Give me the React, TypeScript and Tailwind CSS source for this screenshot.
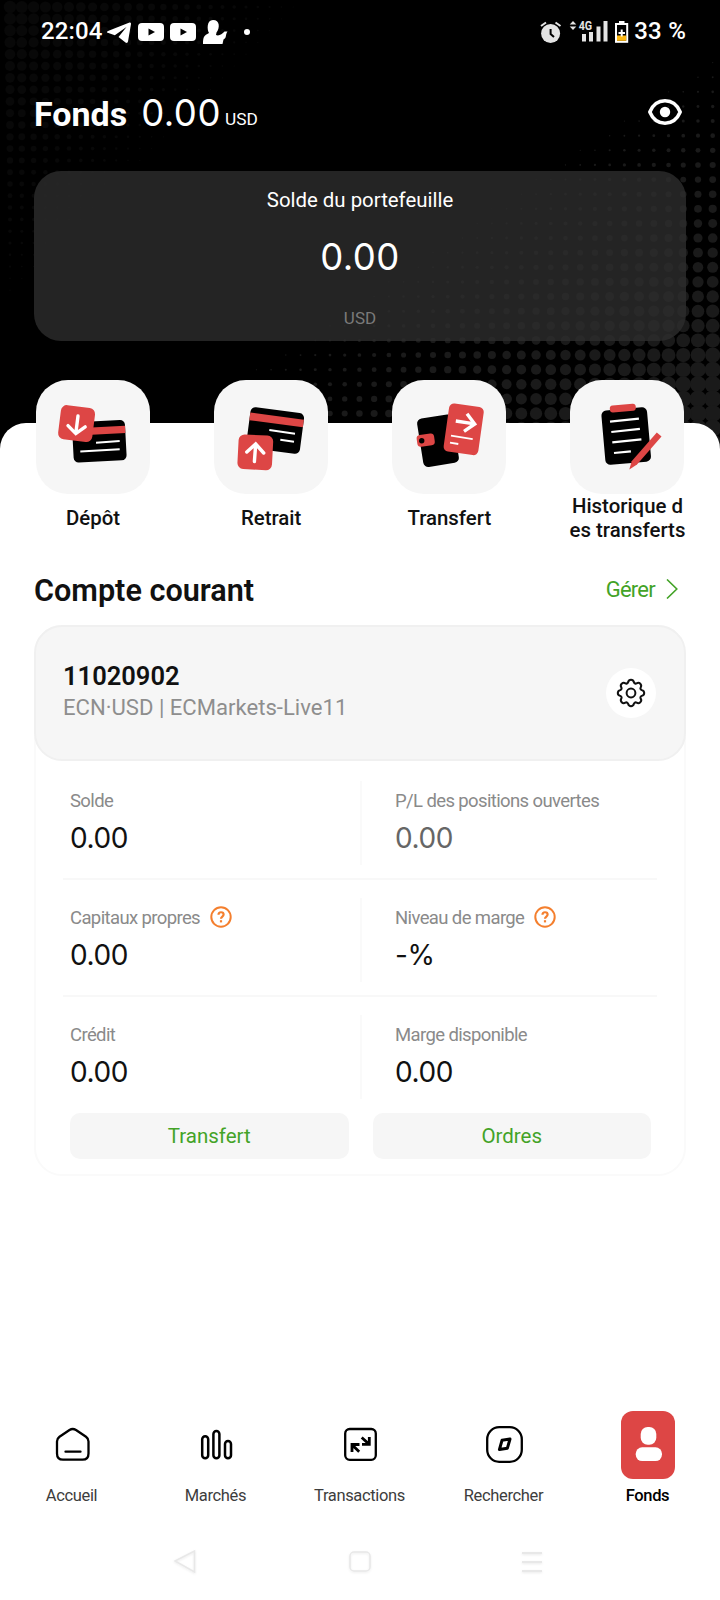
import type { ReactNode } from 'react';

const RED = '#dd4645';

const actions = [
  { label: 'Dépôt', icon: <DepositIcon /> },
  { label: 'Retrait', icon: <WithdrawIcon /> },
  { label: 'Transfert', icon: <TransferIcon /> },
  { label: 'Historique d\nes transferts', icon: <HistoryIcon /> },
];

const metrics = [
  [{ label: 'Solde', value: '0.00' }, { label: 'P/L des positions ouvertes', value: '0.00', muted: true }],
  [{ label: 'Capitaux propres', value: '0.00', help: true }, { label: 'Niveau de marge', value: '-%', help: true }],
  [{ label: 'Crédit', value: '0.00' }, { label: 'Marge disponible', value: '0.00' }],
];

function Halftone() {
  const dots: ReactNode[] = [];
  for (let y = 48; y < 450; y += 14.62) {
    for (let x = 712.7; x > 240; x -= 14.72) {
      const r = Math.min(8.6, 7.6 + (y - 355) * 0.024 - (712 - x) * 0.0163);
      if (r > 0.5) dots.push(<circle key={`r${x}-${y}`} cx={x} cy={y} r={r} fill="#1a1a1a" />);
    }
  }
  for (let y = 7; y < 300; y += 11.8) {
    for (let x = 10; x < 320; x += 11.8) {
      const r = 6.6 - x * 0.02 - y * 0.02;
      if (r > 0.5) dots.push(<circle key={`l${x}-${y}`} cx={x} cy={y} r={r} fill="#080808" />);
    }
  }
  return <svg className="absolute inset-0" width="720" height="460" viewBox="0 0 720 460">{dots}</svg>;
}

function DepositIcon() {
  return (
    <svg width="114" height="114" viewBox="0 0 114 114" fill="none" strokeLinecap="round">
      <g transform="rotate(-3 63.3 61.2)">
        <rect x="36.8" y="41" width="53" height="40.5" rx="5" fill="#000" />
        <rect x="36.8" y="47" width="53" height="7.4" fill={RED} />
      </g>
      <path d="M60 62.7L83.7 61M44.3 71.4L83.7 69.3" stroke="#fff" strokeWidth="2" strokeLinecap="butt" />
      <rect x="23.4" y="26.4" width="34.4" height="34.4" rx="6" fill={RED} transform="rotate(7 40.6 43.6)" />
      <path d="M42 36L39.8 53.4M32 45.6L39.8 53.6L49.2 46.9" stroke="#fff" strokeWidth="3.4" />
    </svg>
  );
}

function WithdrawIcon() {
  return (
    <svg width="114" height="114" viewBox="0 0 114 114" fill="none" strokeLinecap="round">
      <g transform="rotate(7.5 61.2 50.5)">
        <rect x="34.2" y="30" width="54" height="41" rx="5" fill="#000" />
        <rect x="34.2" y="36" width="54" height="7.6" fill={RED} />
      </g>
      <path d="M55.3 50L81 53.7M66.3 59.7L80 61.7" stroke="#fff" strokeWidth="2" strokeLinecap="butt" />
      <rect x="24" y="55" width="34.6" height="34.6" rx="6" fill={RED} transform="rotate(3 41.3 72.3)" />
      <path d="M40.4 81.5L41.7 64M32.8 72L41.7 64L49.7 73" stroke="#fff" strokeWidth="3.4" />
    </svg>
  );
}

function TransferIcon() {
  return (
    <svg width="114" height="114" viewBox="0 0 114 114" fill="none">
      <rect x="28" y="36.2" width="36" height="49" rx="5" fill="#000" transform="rotate(-9 46 60.7)" />
      <rect x="24.9" y="54.2" width="17.6" height="11.8" rx="3.5" fill={RED} transform="rotate(-8 33.7 60)" />
      <circle cx="29.7" cy="60.7" r="2.7" fill="#000" />
      <rect x="54.2" y="25" width="35" height="48.6" rx="5" fill={RED} transform="rotate(8 71.7 49.3)" />
      <path d="M63.8 41L82.5 43.9M75 33.8L82.7 44L72 51.3" stroke="#fff" strokeWidth="3.4" />
      <path d="M59 55.7L80.7 59.1M58 62.6L66.3 64" stroke="#fff" strokeWidth="1.8" />
    </svg>
  );
}

function HistoryIcon() {
  return (
    <svg width="114" height="114" viewBox="0 0 114 114" fill="none">
      <rect x="33.3" y="28.8" width="45.8" height="54.5" rx="5" fill="#000" transform="rotate(-5 56.2 56)" />
      <rect x="39.8" y="24.6" width="26" height="7" rx="3" fill={RED} transform="rotate(-5 52.8 28)" />
      <path d="M40 41.7L68.9 38.6M41.3 52L69.9 48.8M42.3 62.3L71.4 59.3M44 73L60.9 71.3" stroke="#fff" strokeWidth="2.2" />
      <path d="M86.8 52.5L91.5 56.6L67 84.5L59.3 89.4L61.7 81.2Z" fill={RED} />
    </svg>
  );
}

function StatusBar() {
  return (
    <div className="flex h-[63px] items-center pl-[41px] pr-[34px] text-[24px] font-medium leading-none">
      <span className="-mt-px tracking-[0.1px]">22:04</span>
      <svg className="ml-1" width="152" height="28" viewBox="106 18 152 28" fill="#fff">
        <path d="M107 32.5Q106.600 31.500 108 31L129.500 22.500Q131.300 22 131 24L128 41.500Q127.500 43.800 125.500 42.500L118.500 37L126.500 27L114.800 35.200Z" />
        <rect x="138" y="23" width="26" height="18" rx="4" />
        <path d="M148.500 28.500L155 32L148.500 35.500Z" fill="#000" />
        <rect x="170" y="23" width="26" height="18" rx="4" />
        <path d="M180.500 28.500L187 32L180.500 35.500Z" fill="#000" />
        <path d="M203 44C203 37 204 35.500 209 33C207 30 206.500 20 213 20C220 20 220 28 216.500 32.500L216 35C219 36.500 222 34 224.500 31.500L227.500 31.500C225 35 227 38 223.500 39.500L222.500 44Z" />
        <circle cx="247" cy="32" r="3" />
      </svg>
      <svg className="ml-auto" width="92" height="28" viewBox="540 18 92 28" fill="#e4e4e4">
        <circle cx="550.6" cy="33.500" r="9.500" />
        <path d="M541 26L546 22.500M560.500 26L555.500 22.500" stroke="#e4e4e4" strokeWidth="2" />
        <path d="M550.600 29V34L554 37" stroke="#000" strokeWidth="2" fill="none" />
        <path d="M569.700 24.500L573 21L576.300 24.500ZM569.700 26.500L573 30L576.300 26.500Z" />
        <text x="578.700" y="30" fontSize="12" fontWeight="700" textLength="13.500" lengthAdjust="spacingAndGlyphs">4G</text>
        <rect x="582" y="34" width="4" height="7.500" />
        <rect x="589" y="32" width="4" height="9.500" />
        <rect x="596.500" y="26.500" width="4" height="15" />
        <rect x="603.500" y="21" width="4" height="20.500" />
        <rect x="619" y="21" width="5.500" height="3" fill="#fff" />
        <rect x="616" y="24" width="11.200" height="17.800" fill="#000" stroke="#fff" strokeWidth="2" />
        <rect x="617" y="35.500" width="9.200" height="5.300" fill="#fdb813" />
        <path d="M618.500 33H625M621.700 29.500V36.500" stroke="#fff" strokeWidth="2" />
      </svg>
      <span className="-mt-0.5 ml-0.5 tracking-[0.2px]">33 %</span>
    </div>
  );
}

function Metric({ label, value, muted, help }: { label: string; value: string; muted?: boolean; help?: boolean }) {
  return (
    <div className="pt-[26px]">
      <div className="flex h-[26px] items-center text-[18.5px] tracking-[-0.62px] text-[#8a8a8a]">
        {label}
        {help && (
          <svg className="mb-1 ml-[10px]" width="22" height="22" viewBox="0 0 22 22" fill="none" stroke="#f47f2e">
            <circle cx="11" cy="11" r="9.700" strokeWidth="2" />
            <path d="M8.500 8.800C8.500 5.300 13.600 5.500 13.600 8.600C13.600 10.700 11 10.500 11 12.800" strokeWidth="2.200" />
            <path d="M11 14.200V16.400" strokeWidth="2.200" />
          </svg>
        )}
      </div>
      <div className={`mt-[5px] font-[Inter] text-[28px] leading-9 tracking-[-0.4px] ${muted ? 'text-[#666]' : 'text-[#111]'}`}>{value}</div>
    </div>
  );
}

function NavItem({ label, active, children }: { label: string; active?: boolean; children: ReactNode }) {
  return (
    <div className="flex flex-1 flex-col items-center">
      <div className={`h-[68px] w-[54px] rounded-xl ${active ? 'bg-[#dd4645]' : ''}`}>
        <svg width="54" height="68" viewBox="0 0 54 68" fill="none" stroke={active ? 'none' : '#000'} strokeWidth="2.3" strokeLinejoin="round" strokeLinecap="round">{children}</svg>
      </div>
      <span className={`mt-[5px] pr-px text-[16.5px] leading-6 tracking-[-0.35px] ${active ? 'font-medium text-black' : 'text-[#3d3d3d]'}`}>{label}</span>
    </div>
  );
}

export default function App() {
  return (
    <div className="relative h-[1600px] w-[720px] overflow-hidden bg-black font-[Roboto,sans-serif] text-white">
      <Halftone />
      <div className="relative flex h-full flex-col">
        <StatusBar />

        <header className="flex h-[108px] items-start pl-[34px] pr-[38px] pt-[28px]">
          <h1 className="mt-[3px] text-[34px] font-bold leading-[40px]">Fonds</h1>
          <span className="ml-[14px] font-[Inter] text-[36.5px] leading-[44px] tracking-[0.5px]">0.00</span>
          <span className="ml-[4px] mt-[16px] text-[17.3px] leading-6">USD</span>
          <svg className="ml-auto mt-[8px]" width="34" height="26" viewBox="0 0 34 26" fill="none" stroke="#fff" strokeWidth="3.500">
            <path d="M1.800 13C8 -1.900 26 -1.900 32.200 13C26 27.900 8 27.900 1.800 13Z" strokeLinejoin="round" />
            <circle cx="17" cy="13" r="5.200" fill="#fff" stroke="none" />
          </svg>
        </header>

        <section className="mx-[34px] flex h-[170px] flex-col items-center rounded-[27px] bg-[#2d2d2d]/80">
          <div className="mt-[15px] text-[20.4px] leading-7">Solde du portefeuille</div>
          <div className="mt-[21px] font-[Inter] text-[36.5px] leading-[44px] tracking-[0.4px]">0.00</div>
          <div className="mt-[27px] text-[17px] leading-6 text-[#7a7a7a]">USD</div>
        </section>

        <main className="mt-[82px] flex flex-1 flex-col rounded-t-[26px] bg-white text-[#111]">
          <div className="-mt-[43px] flex justify-between pl-9 pr-[35.500px]">
            {actions.map(({ label, icon }) => (
              <div key={label} className="flex w-[114px] flex-col items-center">
                <div className="h-[114px] w-[114px] rounded-[32px] bg-[#f6f6f6]">{icon}</div>
                <div className="flex h-12 items-center whitespace-pre text-center text-[20.4px] font-medium leading-6">{label}</div>
              </div>
            ))}
          </div>

          <div className="mt-[27px] flex h-10 items-center justify-between pl-[34px] pr-[42px]">
            <h2 className="mt-[3px] text-[30.6px] font-semibold">Compte courant</h2>
            <div className="flex items-center gap-[11px] text-[22px] tracking-[-0.75px] text-[#43a327]">
              Gérer
              <svg width="12" height="20" viewBox="0 0 12 20" fill="none" stroke="#43a327" strokeWidth="1.600"><path d="M1 .5L10.800 10L1 19.500" /></svg>
            </div>
          </div>

          <section className="mx-[34px] mt-4 h-[551px] rounded-[28px] border-2 border-[#fafafa]">
            <div className="-mx-0.5 -mt-0.5 flex h-[136px] items-center justify-between rounded-[28px] border-2 border-[#f0f0f0] bg-[#f6f6f6] pl-[27px] pr-[28px]">
              <div className="pb-0.5">
                <div className="text-[25.5px] font-semibold leading-[30px]">11020902</div>
                <div className="text-[22.1px] leading-8 text-[#8e8e8e]">ECN·USD | ECMarkets-Live11</div>
              </div>
              <div className="flex h-[50px] w-[50px] items-center justify-center rounded-full bg-white">
                <svg width="30" height="30" viewBox="-15 -15 30 30" fill="none" stroke="#111" strokeWidth="2" strokeLinejoin="round">
                  <path d="M-2.900 -10.800Q-2.300 -13.200 0 -13.200T2.900 -10.800Q4 -8.700 5.600 -9.700Q7.700 -11 9.300 -9.300T9.700 -5.600Q8.700 -4 10.800 -2.900Q13.200 -2.300 13.200 0T10.800 2.900Q8.700 4 9.700 5.600Q11 7.700 9.300 9.300T5.600 9.700Q4 8.700 2.900 10.800Q2.300 13.200 0 13.200T-2.900 10.800Q-4 8.700 -5.600 9.700Q-7.700 11 -9.300 9.300T-9.700 5.600Q-8.700 4 -10.800 2.900Q-13.200 2.300 -13.200 0T-10.800 -2.900Q-8.700 -4 -9.700 -5.600Q-11 -7.700 -9.300 -9.300T-5.600 -9.700Q-4 -8.700 -2.900 -10.800Z" />
                  <circle r="4.400" />
                </svg>
              </div>
            </div>

            <div className="mx-[27px] mt-0.5 divide-y-2 divide-[#f8f8f8]">
              {metrics.map(([left, right]) => (
                <div key={left.label} className="flex h-[117px] items-start pl-[7px]">
                  <div className="w-[290px]"><Metric {...left} /></div>
                  <div className="mt-[18px] h-[84px] w-0.5 bg-[#fafafa]" />
                  <div className="pl-[33px]"><Metric {...right} /></div>
                </div>
              ))}
            </div>

            <div className="-mt-px ml-[34px] mr-[33px] flex gap-6 text-[20.5px] text-[#43a327]">
              <button className="h-[46px] flex-1 rounded-[10px] bg-[#f6f6f6]">Transfert</button>
              <button className="h-[46px] flex-1 rounded-[10px] bg-[#f6f6f6]">Ordres</button>
            </div>
          </section>

          <nav className="mt-auto flex">
            <NavItem label="Accueil">
              <path d="M24.500 19Q27.700 17 31 19L41 25.800Q43.500 27.600 43.500 30.500V42.500Q43.500 48.700 37.500 48.700H18Q12 48.700 12 42.500V30.500Q12 27.600 14.500 25.800ZM20.500 40.700H35.500" />
            </NavItem>
            <NavItem label="Marchés">
              <g strokeWidth="2.500">
                <rect x="13.200" y="25.200" width="6" height="22" rx="3" />
                <rect x="24.400" y="20" width="6" height="27.200" rx="3" />
                <rect x="36" y="30" width="6" height="17.200" rx="3" />
              </g>
            </NavItem>
            <NavItem label="Transactions">
              <rect x="12.200" y="18" width="30.600" height="30.800" rx="4.500" />
              <path d="M28.700 26.500L36.300 33.400M36.300 26V33.400H29M26.200 40.800L19 33.700M19 41V33.500H26.500" strokeWidth="2.800" strokeLinecap="butt" strokeLinejoin="miter" />
            </NavItem>
            <NavItem label="Rechercher">
              <rect x="10.200" y="16.200" width="34.600" height="34.600" rx="12" />
              <path d="M25 29.300L33 28L30.400 37.200L22.400 38.600Z" strokeWidth="3" />
            </NavItem>
            <NavItem label="Fonds" active>
              <rect x="19.700" y="16" width="15.600" height="17.700" rx="7" fill="#fff" />
              <rect x="14.700" y="36.300" width="26.300" height="13.800" rx="6.500" fill="#fff" />
            </NavItem>
          </nav>

          <div className="flex h-[92px] justify-center pt-[39px]">
            <svg className="drop-shadow-[0_1px_1px_rgba(0,0,0,0.08)]" width="380" height="28" viewBox="170 1547 380 28" fill="none" stroke="#e8e8e8" strokeWidth="1.500">
              <path d="M175 1561L194.500 1551V1572Z" />
              <rect x="350" y="1552" width="20" height="19" rx="4" />
              <path d="M522 1553H542M522 1562H542M522 1571H542" strokeWidth="2" />
            </svg>
          </div>
        </main>
      </div>
    </div>
  );
}
